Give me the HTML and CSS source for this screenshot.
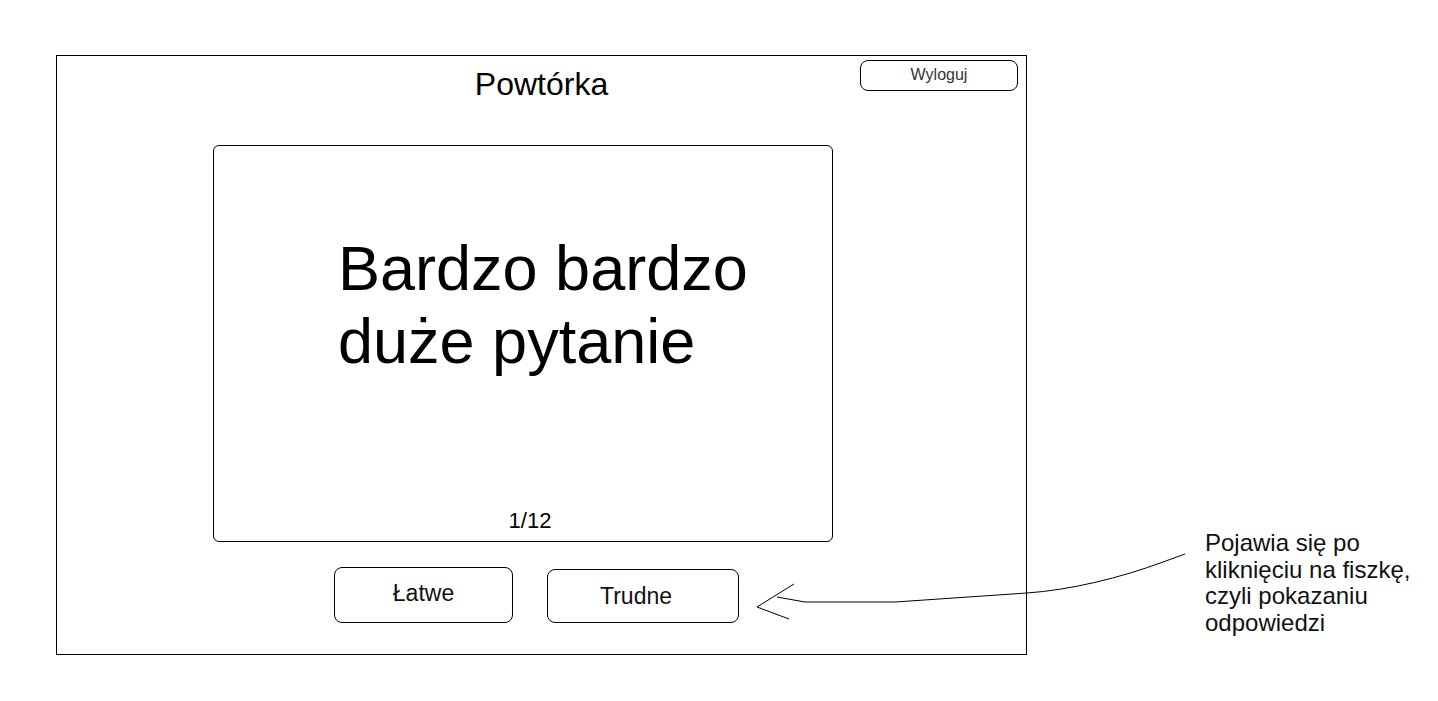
FILE: index.html
```html
<!DOCTYPE html>
<html lang="pl">
<head>
  <meta charset="UTF-8">
  <meta name="viewport" content="width=device-width, initial-scale=1.0">
  <title>Powtórka</title>
  <link rel="stylesheet" href="styles.css">
</head>
<body>
  <div class="page">
    <main class="frame">
      <header class="topbar">
        <span></span>
        <h1 class="title">Powtórka</h1>
        <button class="logout">Wyloguj</button>
      </header>

      <section class="card">
        <p class="question">Bardzo bardzo duże pytanie</p>
        <p class="counter">1/12</p>
      </section>

      <div class="answers">
        <button class="answer easy">Łatwe</button>
        <button class="answer hard">Trudne</button>
      </div>
    </main>

    <p class="note">Pojawia się po kliknięciu na fiszkę, czyli pokazaniu odpowiedzi</p>

    <!-- strzałka od notatki do przycisków -->
    <svg class="arrow" width="1438" height="701" viewBox="0 0 1438 701">
      <path d="M1185 554 L1163 562 C1120 578 1070 590 1027 593 L895 602 L805 602 L777 597" />
      <path d="M794 584 L757 607 L789 619" />
    </svg>
  </div>
</body>
</html>
```

FILE: styles.css
```css
body {
  margin: 0;
  font-family: "Liberation Sans", Arial, sans-serif;
  background-color: #fff;
  color: #000;
}
.page {
  position: relative;
  display: flex;
  align-items: flex-start;
  width: 1438px;
  height: 701px;
}
.frame {
  box-sizing: border-box;
  width: 971px;
  height: 600px;
  margin: 55px 0 0 56px;
  border: 1px solid #000;
  display: flex;
  flex-direction: column;
}
.topbar {
  display: grid;
  grid-template-columns: 1fr auto 1fr;
  align-items: start;
}
.title {
  margin: 10px 0 0;
  font-size: 32px;
  line-height: 37px;
  font-weight: 400;
}
.logout {
  justify-self: end;
  box-sizing: border-box;
  width: 158px;
  height: 31px;
  margin: 4px 8px 0 0;
  padding: 0 0 1px;
  border: 1px solid #000;
  border-radius: 8px;
  background: #fff;
  font-family: inherit;
  font-size: 16px;
  color: #333;
}
.card {
  box-sizing: border-box;
  width: 620px;
  height: 397px;
  margin: 42px 0 0 156px;
  border: 1px solid #000;
  border-radius: 6px;
  display: flex;
  flex-direction: column;
}
.question {
  margin: 86px 0 0 124px;
  max-width: 440px;
  font-size: 63px;
  line-height: 73px;
}
.counter {
  margin: auto 0 8px;
  padding-left: 14px;
  text-align: center;
  font-size: 22px;
  line-height: 25px;
}
.answers {
  display: flex;
  align-items: flex-end;
  gap: 34px;
  margin: 25px 0 0 277px;
}
.answer {
  box-sizing: border-box;
  border: 1px solid #000;
  border-radius: 8px;
  background: #fff;
  font-family: inherit;
  font-size: 23px;
  color: #111;
  padding: 0;
}
.easy {
  width: 179px;
  height: 56px;
  padding-bottom: 3px;
}
.hard {
  width: 192px;
  height: 54px;
  padding-right: 14px;
}
.note {
  width: 215px;
  margin: 530px 0 0 178px;
  font-size: 24px;
  line-height: 26.7px;
  color: #111;
}
.arrow {
  position: absolute;
  top: 0;
  left: 0;
  pointer-events: none;
  fill: none;
  stroke: #000;
  stroke-width: 1;
}
```
